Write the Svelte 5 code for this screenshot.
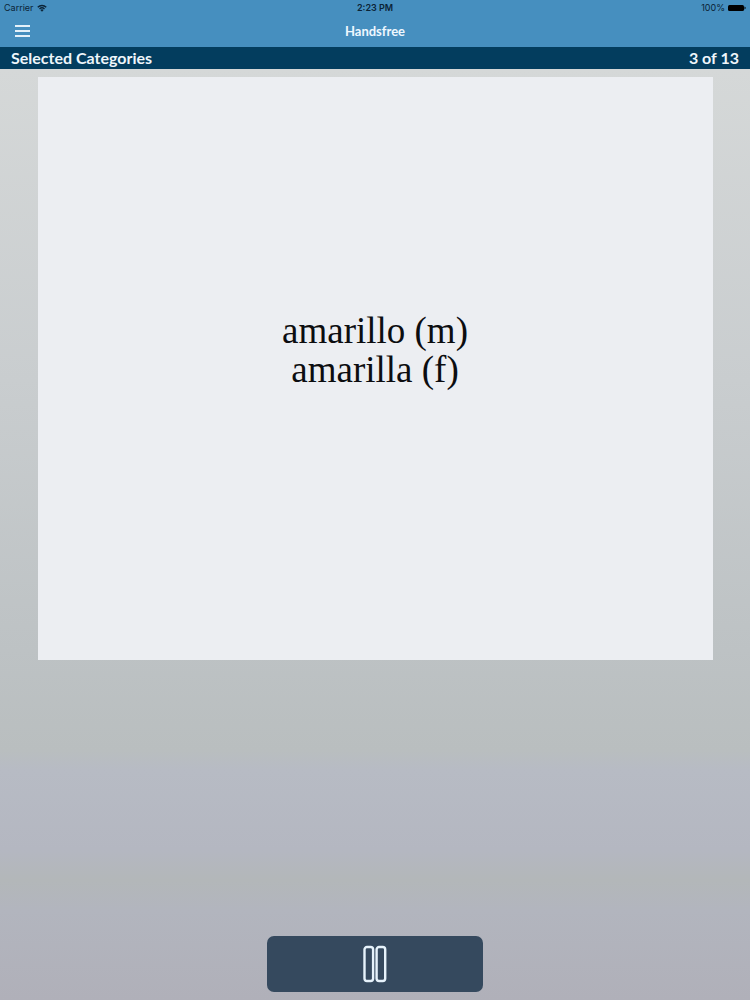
<script>
  let playing = $state(true);

  const card = { index: 3, total: 13, lines: ['amarillo (m)', 'amarilla (f)'] };
</script>

<div class="screen">
  <header class="top">
    <div class="status-bar">
      <div class="carrier">
        <span>Carrier</span>
        <svg class="wifi" viewBox="0 0 20 16" aria-hidden="true">
          <path d="M1.5 6.5a12 12 0 0 1 17 0" />
          <path d="M5 10a7.2 7.2 0 0 1 10 0" />
          <path class="dot" d="M10 15.5 6.8 12.2a4.6 4.6 0 0 1 6.4 0z" />
        </svg>
      </div>
      <span class="time">2:23 PM</span>
      <div class="battery">
        <span>100%</span>
        <svg class="battery-icon" viewBox="0 0 18 8" aria-hidden="true">
          <rect x="0" y="0.9" width="16" height="6.2" rx="1.5" />
          <path d="M16.5 2.6q1.2 .4 1.2 1.4t-1.2 1.4z" />
        </svg>
      </div>
    </div>
    <nav class="nav-bar">
      <button class="menu" aria-label="Menu">
        <svg viewBox="0 0 15 12" aria-hidden="true">
          <path d="M0 1h15M0 6h15M0 11h15" />
        </svg>
      </button>
      <h1>Handsfree</h1>
    </nav>
  </header>

  <div class="category-bar">
    <span>Selected Categories</span>
    <span>{card.index} of {card.total}</span>
  </div>

  <main>
    <section class="card">
      {#each card.lines as line}
        <p>{line}</p>
      {/each}
    </section>

    <button class="play" aria-label={playing ? 'Pause' : 'Play'} onclick={() => (playing = !playing)}>
      <svg viewBox="0 0 24 38" aria-hidden="true">
        {#if playing}
          <rect x="1.5" y="2" width="8.6" height="34" rx="2.5" />
          <rect x="13.6" y="2" width="8.6" height="34" rx="2.5" />
        {:else}
          <path d="M2 3v32l20-16z" />
        {/if}
      </svg>
    </button>
  </main>
</div>

<style>
  :global(body) {
    margin: 0;
  }

  .screen {
    display: flex;
    flex-direction: column;
    min-height: 100vh;
    background: linear-gradient(
      #d5d8d8 7%,
      #c9cdcf 38%,
      #bdc2c4 65%,
      #b9bebf 75%,
      #b7bbc4 77%,
      #b4b7c1 85%,
      #b3b7b9 88%,
      #b2b5be 91%,
      #b0b0b9 100%
    );
    font-family: Avenir, Lato, sans-serif;
  }

  .top {
    background: #468fbf;
  }

  .status-bar {
    display: grid;
    grid-template-columns: 1fr auto 1fr;
    align-items: center;
    height: 15px;
    padding: 0 4px;
    color: #0b2336;
    font-family: Inter, sans-serif;
    font-size: 9px;
    line-height: 15px;
  }

  .carrier,
  .battery {
    display: flex;
    align-items: center;
    gap: 3px;
  }

  .battery {
    justify-content: flex-end;
  }

  .time {
    font-weight: 600;
  }

  .wifi {
    width: 10px;
    height: 8px;
    fill: none;
    stroke: #0b2336;
    stroke-width: 2.6;
  }

  .wifi .dot {
    fill: #0b2336;
    stroke: none;
  }

  .battery-icon {
    width: 18px;
    height: 8px;
    fill: #000;
  }

  .nav-bar {
    display: grid;
    grid-template-columns: 45px 1fr 45px;
    align-items: center;
    height: 32px;
  }

  .menu {
    display: flex;
    align-items: center;
    justify-content: center;
    height: 32px;
    padding: 0;
    border: 0;
    background: none;
  }

  .menu svg {
    width: 15px;
    height: 12px;
    stroke: #e4f1fa;
    stroke-width: 2;
  }

  h1 {
    margin: 0;
    color: #eef8ff;
    font-size: 13px;
    font-weight: 700;
    text-align: center;
  }

  .category-bar {
    display: flex;
    justify-content: space-between;
    padding: 0 11px;
    background: #033d5e;
    color: #eef6fb;
    font-size: 16px;
    font-weight: 700;
    line-height: 22px;
  }

  main {
    flex: 1;
    display: grid;
    grid-template-rows: 19fr 9fr auto;
    padding: 8px 5%;
  }

  .card {
    display: flex;
    flex-direction: column;
    justify-content: center;
    padding-bottom: 36px;
    background: #eceef2;
    color: #0c0d10;
    font-family: Georgia, "Liberation Serif", serif;
    font-size: 37px;
    line-height: 39px;
    text-align: center;
  }

  .card p {
    margin: 0;
  }

  .play {
    grid-row: 3;
    justify-self: center;
    display: flex;
    align-items: center;
    justify-content: center;
    width: 32%;
    height: 56px;
    padding: 0;
    border: 0;
    border-radius: 7px;
    background: #35495e;
  }

  .play svg {
    width: 24px;
    height: 38px;
    fill: none;
    stroke: #e6f2fb;
    stroke-width: 2.4;
  }
</style>
